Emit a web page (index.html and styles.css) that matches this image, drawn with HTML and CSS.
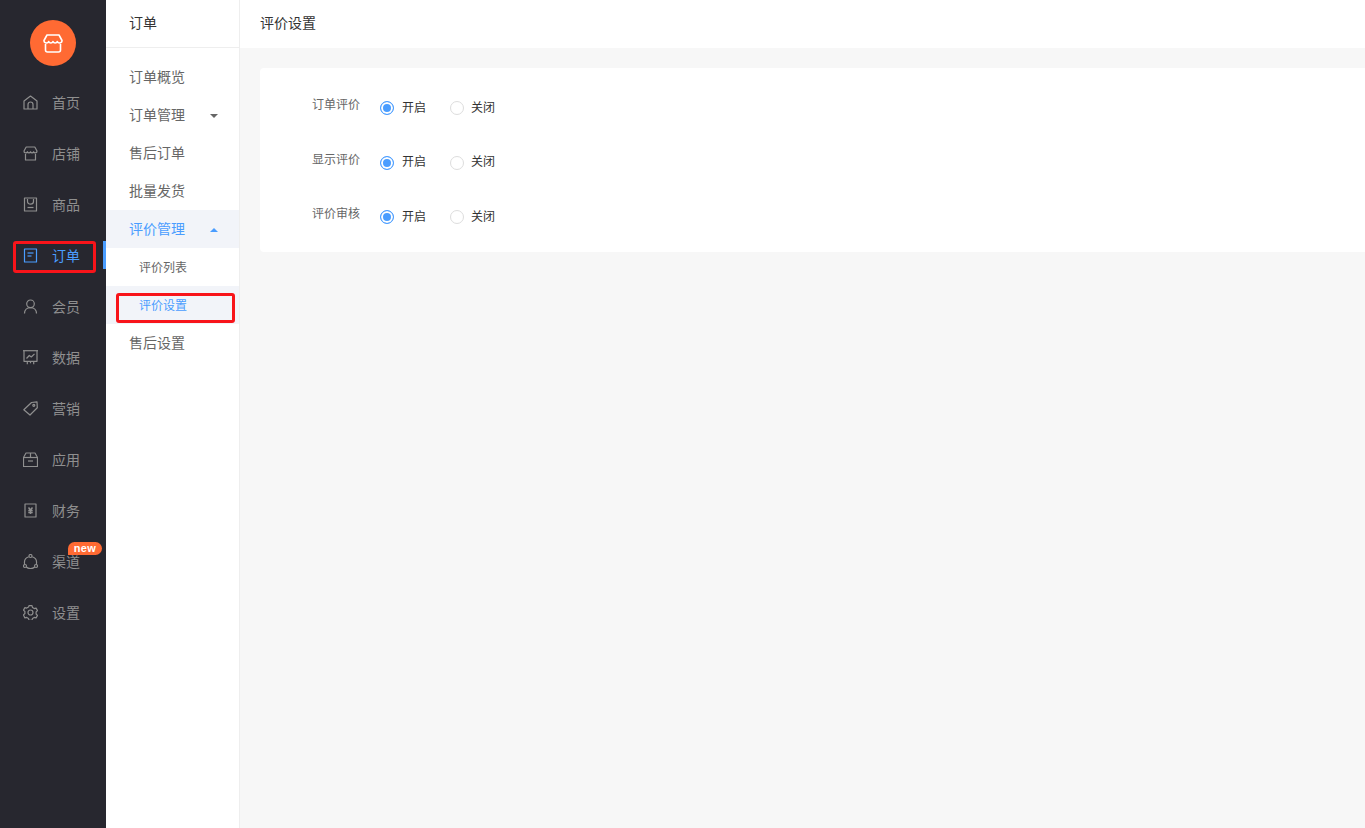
FILE: index.html
```html
<!DOCTYPE html>
<html lang="zh-CN">
    <head>
        <meta charset="UTF-8">
        <meta name="viewport" content="width=device-width, initial-scale=1.0">
        <title>评价设置</title>
        <link rel="stylesheet" href="styles.css">
    </head>
    <body>
        <div class="layout">
            <aside class="side-nav">
                <div class="logo">
                    <svg width="20" height="19" viewBox="0 0 20 19" fill="none" stroke="#fff" stroke-width="1.6" stroke-linejoin="round">
                        <path d="M4 1h12l3 5.500c.3 2.800-3.800 3.300-4.700 1-.8 2-3.500 2-4.300 0-.8 2-3.500 2-4.300 0C4.800 9.800.700 9.300 1 6.500z"/>
                        <path d="M2.500 10v6a2 2 0 0 0 2 2h11a2 2 0 0 0 2-2v-6"/>
                    </svg>
                </div>
                <ul class="nav-list">
                    <li class="nav-item">
                        <svg class="nav-icon" viewBox="0 0 15 15"><path d="M1 6 7.500 1 14 6v8H1z"/><path d="M5 14V9.500a2.500 2.500 0 0 1 5 0V14"/></svg>
                        <span>首页</span>
                    </li>
                    <li class="nav-item">
                        <svg class="nav-icon" viewBox="0 0 15 15"><path d="M3.200 1h8.600l2.200 4c.2 2.200-2.800 2.600-3.400.7-.6 1.600-2.500 1.600-3.100 0-.6 1.600-2.500 1.600-3.100 0C3.800 7.600.800 7.200 1 5z"/><path d="M2.500 8v6h10V8"/></svg>
                        <span>店铺</span>
                    </li>
                    <li class="nav-item">
                        <svg class="nav-icon" viewBox="0 0 15 15"><path d="M1.500 1h12v13h-12z"/><path d="M4.500 2v2.500c0 3.500 6 3.500 6 0V2"/><path d="M4.500 10.500h6"/></svg>
                        <span>商品</span>
                    </li>
                    <li class="nav-item active">
                        <svg class="nav-icon" viewBox="0 0 15 15"><path d="M1.500 1h12v13h-12z"/><path d="M4.500 5h6"/><path d="M4.500 8h4"/></svg>
                        <span>订单</span>
                    </li>
                    <li class="nav-item">
                        <svg class="nav-icon" viewBox="0 0 15 15"><circle cx="7.500" cy="4.800" r="3.800"/><path d="M1.500 14.500c0-3.500 2.500-5.900 6-5.900s6 2.400 6 5.900"/></svg>
                        <span>会员</span>
                    </li>
                    <li class="nav-item">
                        <svg class="nav-icon" viewBox="0 0 15 15"><path d="M0 .700h15"/><path d="M1 .700v10.600h13V.700"/><path d="M3.500 8.500l2.800-3 2 1.500 3.200-3.200"/><path d="M4.300 11.300v3M10.700 11.300v3M7.500 11.300v2"/></svg>
                        <span>数据</span>
                    </li>
                    <li class="nav-item">
                        <svg class="nav-icon" viewBox="0 0 15 15"><path d="M8.500 1.500l5.500-.7.300 6-7.300 7.200L.8 8.800z"/><circle cx="10.800" cy="4.300" r="1"/></svg>
                        <span>营销</span>
                    </li>
                    <li class="nav-item">
                        <svg class="nav-icon" viewBox="0 0 15 15"><path d="M3 1h9l2.500 4.500v9H.5v-9z"/><path d="M.5 5.500h14"/><path d="M5 9h5"/><path d="M7.500 1v4.500"/></svg>
                        <span>应用</span>
                    </li>
                    <li class="nav-item">
                        <svg class="nav-icon" viewBox="0 0 15 15"><path d="M2 1h11v13H2z"/><path d="M5.500 4.500 7.500 7l2-2.500M5.300 7.500h4.400M5.300 9.500h4.400M7.500 7v4" stroke-width="1.500"/></svg>
                        <span>财务</span>
                    </li>
                    <li class="nav-item">
                        <svg class="nav-icon" viewBox="0 0 15 15"><circle cx="7.500" cy="2" r="1.500"/><circle cx="2" cy="12" r="1.500"/><circle cx="13" cy="12" r="1.500"/><path d="M5.800 2.800A6.200 6.200 0 0 0 1.500 9.500L1.700 10.500M9.200 2.800a6.200 6.200 0 0 1 4.300 6.700l-.2 1M3.300 13a6.200 6.200 0 0 0 8.400 0"/></svg>
                        <span>渠道</span>
                        <em class="badge">new</em>
                    </li>
                    <li class="nav-item">
                        <svg class="nav-icon" viewBox="0 0 15 15"><path d="M6 .7h3l.5 1.900 1.700 1 1.900-.5 1.400 2.500-1.400 1.400v2l1.400 1.400-1.400 2.500-1.900-.5-1.700 1-.5 1.900H6l-.5-1.900-1.700-1-1.900.5L.5 9.900l1.400-1.400v-2L.5 5.100l1.400-2.500 1.900.5 1.700-1z"/><circle cx="7.500" cy="7.500" r="2.500"/></svg>
                        <span>设置</span>
                    </li>
                </ul>
            </aside>

            <nav class="sub-nav">
                <div class="sub-title">订单</div>
                <ul class="sub-list">
                    <li class="sub-item">订单概览</li>
                    <li class="sub-item">订单管理<i class="caret"></i></li>
                    <li class="sub-item">售后订单</li>
                    <li class="sub-item">批量发货</li>
                    <li class="sub-item open">评价管理<i class="caret up"></i></li>
                    <li class="sub-child">评价列表</li>
                    <li class="sub-child current">评价设置</li>
                    <li class="sub-item">售后设置</li>
                </ul>
            </nav>

            <main class="content">
                <header class="page-title">评价设置</header>
                <section class="panel">
                    <div class="form-row">
                        <label class="form-label">订单评价</label>
                        <div class="radio on"><i></i>开启</div>
                        <div class="radio"><i></i>关闭</div>
                    </div>
                    <div class="form-row">
                        <label class="form-label">显示评价</label>
                        <div class="radio on"><i></i>开启</div>
                        <div class="radio"><i></i>关闭</div>
                    </div>
                    <div class="form-row">
                        <label class="form-label">评价审核</label>
                        <div class="radio on"><i></i>开启</div>
                        <div class="radio"><i></i>关闭</div>
                    </div>
                </section>
            </main>
        </div>

        <div class="mark mark-nav"></div>
        <div class="mark mark-sub"></div>
    </body>
</html>
```

FILE: styles.css
```css
:root {
    --primary: #4a9dff;
    --dark: #27272f;
    --text: #333;
    --muted: #666;
    --line: #eee;
    --bg: #f7f7f7;
    --orange: #ff6a33;
    --mark: #f8141a;
}

* {
    margin: 0;
    padding: 0;
    box-sizing: border-box;
}

ul {
    list-style: none;
}

i, em {
    font-style: normal;
}

body {
    font-family: "Liberation Sans", "Noto Sans CJK SC", sans-serif;
    font-size: 14px;
    color: var(--text);
    background: var(--bg);
    overflow: hidden;
}

.layout {
    display: flex;
    height: 828px;
}

.side-nav {
    width: 106px;
    flex: none;
    background: var(--dark);
    padding-top: 20px;
}

.logo {
    width: 46px;
    height: 46px;
    margin: 0 auto 11px;
    border-radius: 50%;
    background: var(--orange);
    display: flex;
    align-items: center;
    justify-content: center;
}

.nav-list {
    margin-top: -1px;
}

.nav-item {
    position: relative;
    height: 51px;
    display: flex;
    align-items: center;
    padding-left: 23px;
    color: #8f8f8f;
}

.nav-item span {
    margin-left: 14px;
}

.nav-icon {
    width: 15px;
    height: 15px;
    margin-top: 2px;
    flex: none;
    fill: none;
    stroke: currentColor;
    stroke-width: 1.2;
    stroke-linejoin: round;
}

.nav-item.active {
    color: var(--primary);
}

.nav-item.active::after {
    content: "";
    position: absolute;
    right: 0;
    top: 12px;
    width: 3px;
    height: 28px;
    background: var(--primary);
}

.badge {
    position: absolute;
    left: 68px;
    top: 7px;
    width: 34px;
    height: 13px;
    line-height: 13px;
    border-radius: 7px 7px 7px 0;
    background: var(--orange);
    color: #fff;
    font-size: 11px;
    font-weight: 700;
    letter-spacing: .3px;
    text-align: center;
}

.sub-nav {
    width: 134px;
    flex: none;
    background: #fff;
    border-right: 1px solid var(--line);
}

.sub-title {
    height: 48px;
    line-height: 47px;
    padding-left: 23px;
    border-bottom: 1px solid var(--line);
    color: var(--text);
}

.sub-list {
    padding-top: 10px;
}

.sub-item, .sub-child {
    height: 38px;
    line-height: 38px;
    position: relative;
    color: var(--muted);
}

.sub-item {
    padding-left: 23px;
}

.sub-child {
    padding-left: 33px;
    font-size: 12px;
    line-height: 40px;
}

.sub-item.open {
    background: #f2f4f9;
    color: var(--primary);
}

.sub-child.current {
    background: #f2f4f9;
    color: var(--primary);
}

.caret {
    position: absolute;
    left: 104px;
    top: 18px;
    border: 4px solid transparent;
    border-top-color: #666;
    border-bottom-width: 0;
}

.caret.up {
    border-top-width: 0;
    border-top-color: transparent;
    border-bottom-width: 4px;
    border-bottom-color: var(--primary);
}

.content {
    flex: 1;
    min-width: 0;
}

.page-title {
    height: 48px;
    line-height: 47px;
    padding-left: 20px;
    background: #fff;
    color: var(--text);
}

.panel {
    margin: 20px 0 0 20px;
    height: 184px;
    padding-top: 12px;
    background: #fff;
    border-radius: 4px 0 0 4px;
}

.form-row {
    height: 54.500px;
    display: flex;
    align-items: center;
    font-size: 12px;
}

.form-label {
    width: 100px;
    text-align: right;
    color: var(--muted);
    margin-top: -7px;
}

.radio {
    display: flex;
    align-items: center;
    width: 70px;
    padding-bottom: 2px;
    color: var(--text);
}

.radio i {
    width: 14px;
    height: 14px;
    margin: 4px 7px 0 0;
    border: 1px solid #ddd;
    border-radius: 50%;
    background: #fff;
}

.radio.on i {
    margin-right: 8px;
    border-color: var(--primary);
    background: var(--primary);
    box-shadow: inset 0 0 0 2px #fff;
}

.form-label + .radio {
    margin-left: 20px;
}

.mark {
    position: absolute;
    border: 3px solid var(--mark);
    border-radius: 3px;
}

.mark-nav {
    left: 13px;
    top: 241px;
    width: 83px;
    height: 32px;
}

.mark-sub {
    left: 116px;
    top: 293px;
    width: 119px;
    height: 30px;
}
```
